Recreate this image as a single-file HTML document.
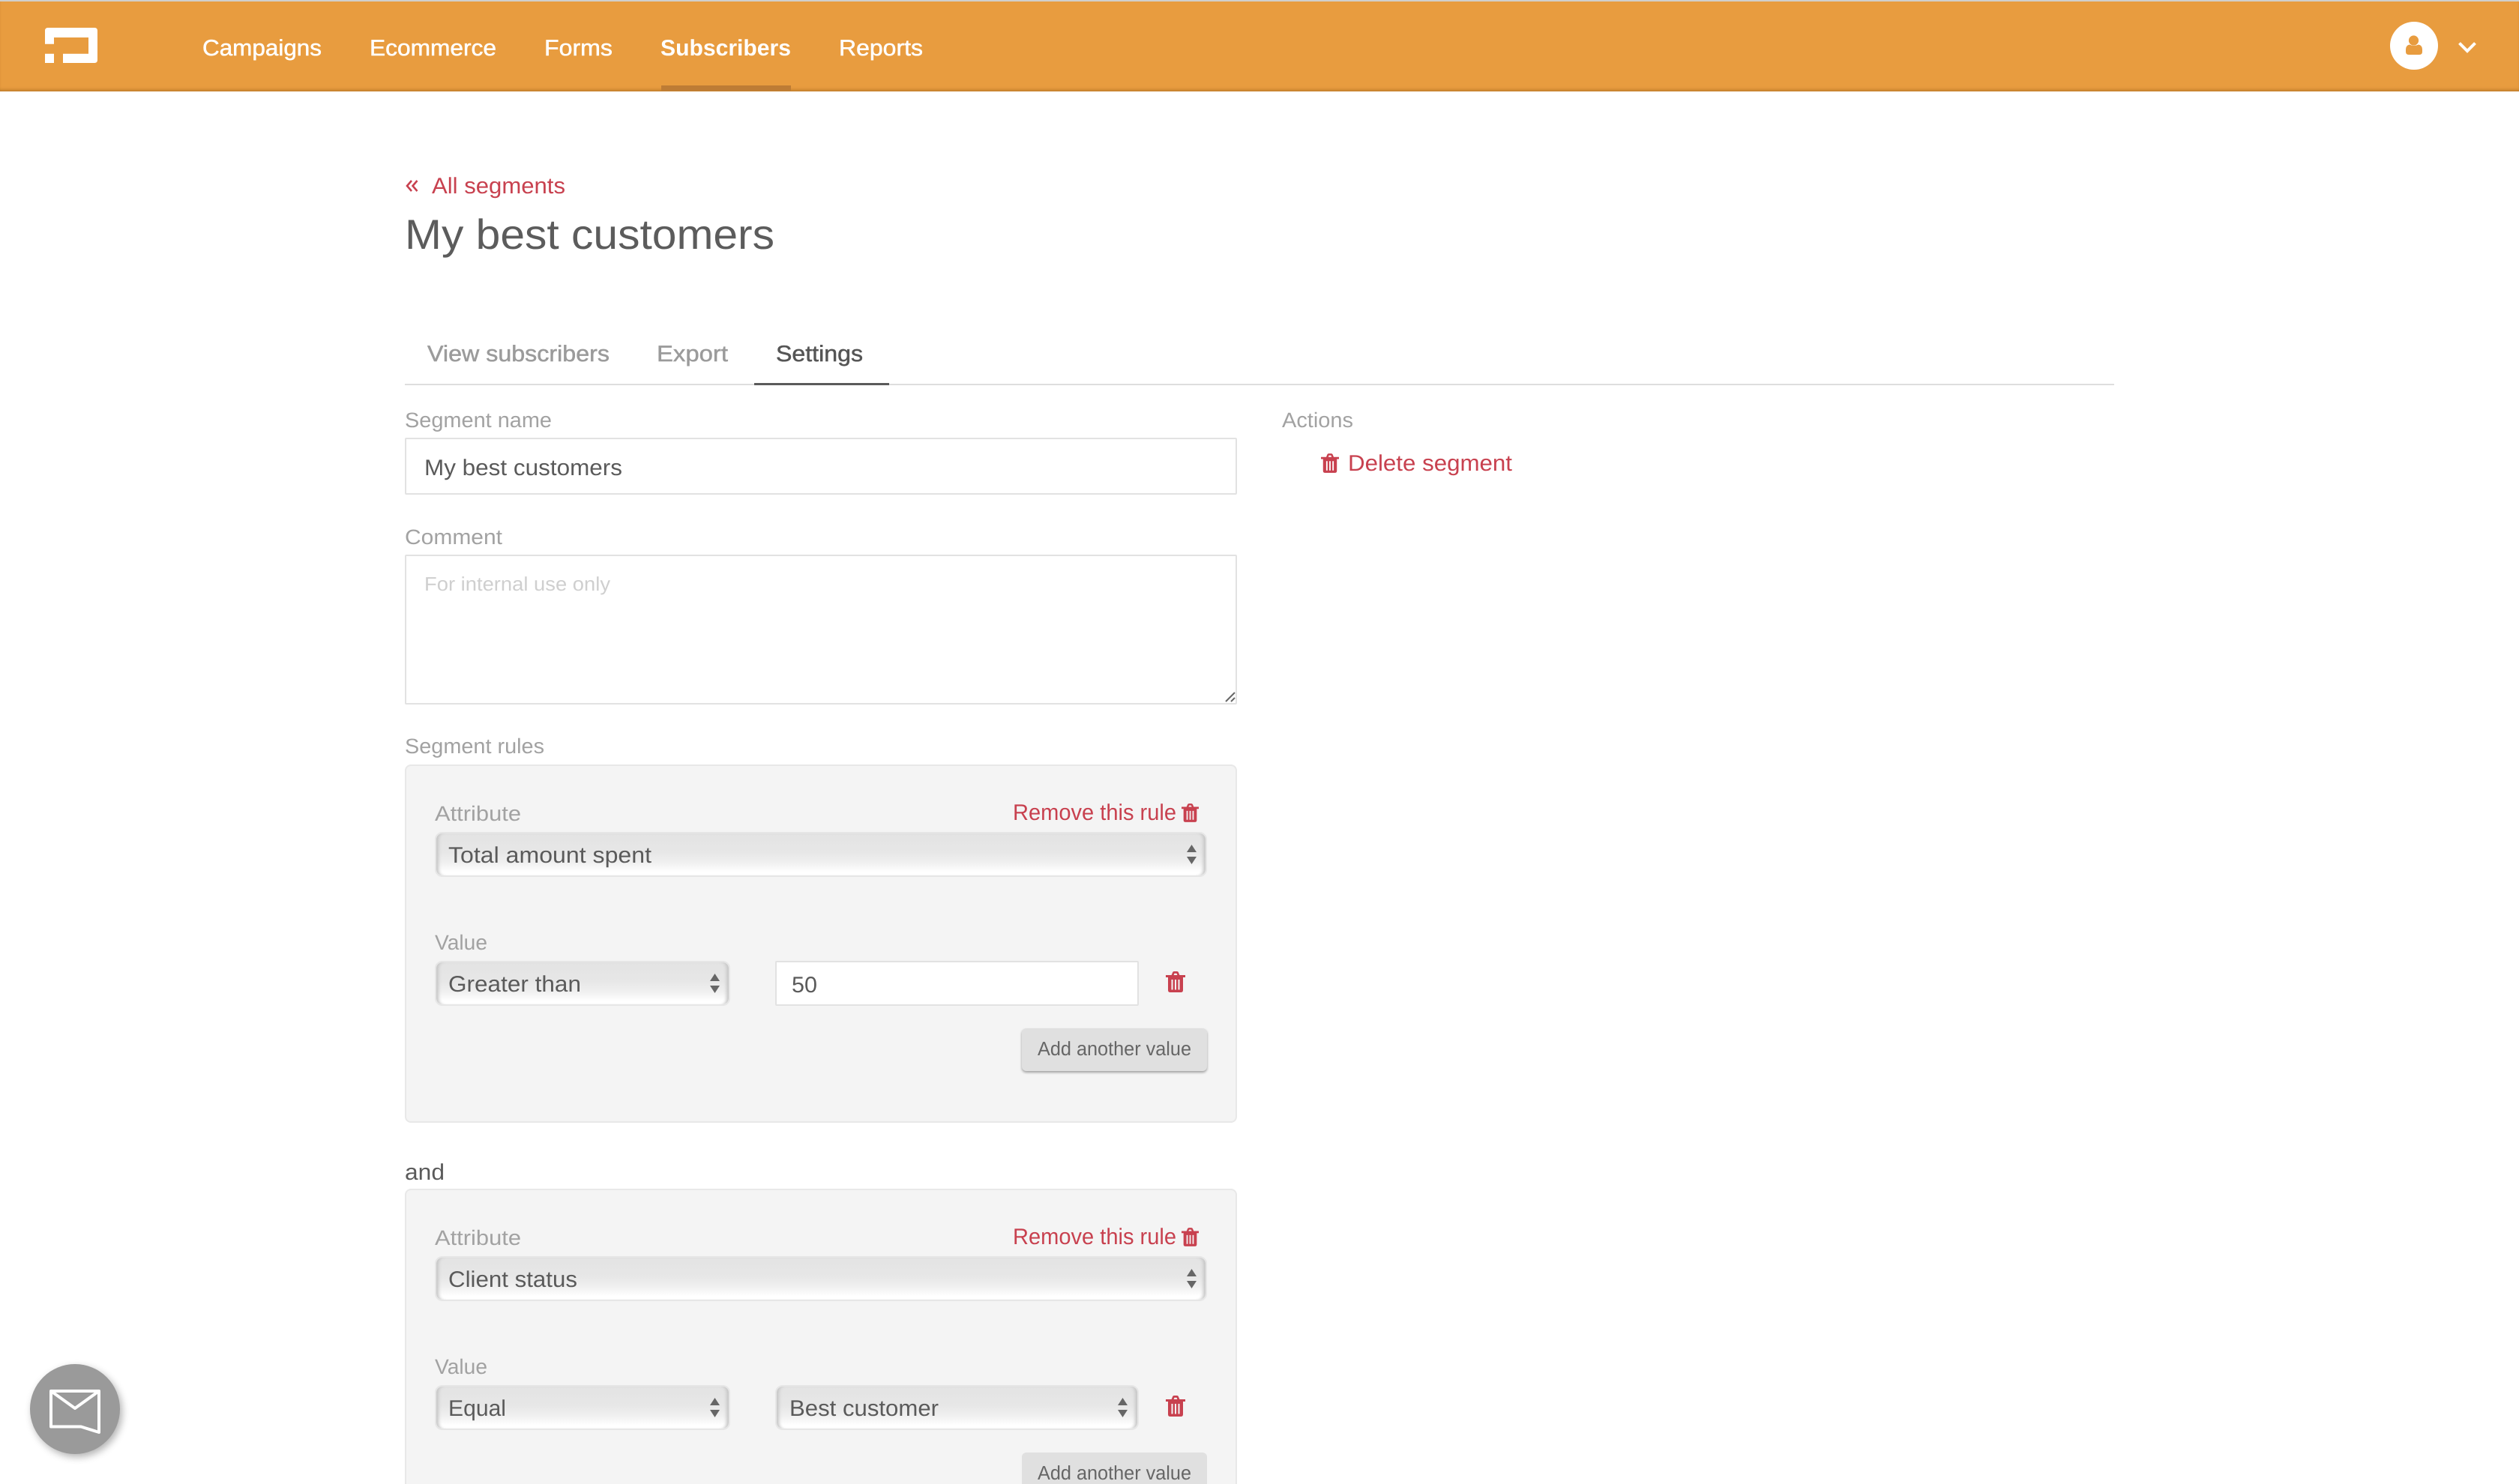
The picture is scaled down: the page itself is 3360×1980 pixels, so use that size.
<!DOCTYPE html>
<html lang="en">
<head>
<meta charset="utf-8">
<title>My best customers</title>
<style>
html,body{margin:0;padding:0;width:3360px;height:1980px;overflow:hidden;background:#fff}
#page{position:relative;width:3360px;height:1980px;overflow:hidden;background:#fff}
.a{position:absolute;box-sizing:border-box}
#hd{left:0;top:0;width:3360px;height:122px;background:#e89c3f;border-top:2px solid #d0cfcc;box-shadow:inset 0 -4px 4px -2px rgba(120,70,10,.4)}
#act{left:882px;top:114px;width:173px;height:7px;background:#bd7c35}
.line{left:540px;top:512px;width:2280px;height:2px;background:#dedede}
#tabon{left:1006px;top:511px;width:180px;height:3px;background:#5a5a5a}
.in{background:#fff;border:2px solid #e2e2e2;border-radius:2px}
.panel{background:#f4f4f4;border:2px solid #e8e8e8;border-radius:8px;left:540px;width:1110px}
.sel{border:2px solid #e6e6e6;border-radius:10px;background:linear-gradient(#e3e3e3 0,#e7e7e7 45%,#f0f0f0 70%,#fff 92%);box-shadow:inset 6px 0 4px -3px #c6c6c6,inset -6px 0 4px -3px #c6c6c6}
.btn{background:#e0e0e0;border-radius:6px;box-shadow:0 2px 3px rgba(0,0,0,.35)}
#fab{left:40px;top:1820px;width:120px;height:120px;border-radius:50%;background:#9a9a9a;box-shadow:3px 4px 10px rgba(0,0,0,.3)}
svg#o{position:absolute;left:0;top:0}
text{font-family:"Liberation Sans",sans-serif;text-rendering:geometricPrecision}
.t30{font-size:30px}.t28{font-size:28px}.t26{font-size:26px}
.nav{font-size:30px;fill:#fff;stroke:#fff;stroke-width:.5px}
.lab{font-size:28px;fill:#a2a2a2}
.red{font-size:30px;fill:#c8414f}
.dark{font-size:30px;fill:#5a5a5a}
.tab{font-size:30px;fill:#9b9b9b;stroke:#9b9b9b;stroke-width:.5px}
</style>
</head>
<body>
<div id="page">
<div class="a" id="hd"></div>
<div class="a" id="act"></div>
<div class="a line"></div>
<div class="a" id="tabon"></div>

<div class="a in" style="left:540px;top:584px;width:1110px;height:76px"></div>
<div class="a in" style="left:540px;top:740px;width:1110px;height:200px"></div>

<div class="a panel" style="top:1020px;height:478px"></div>
<div class="a sel" style="left:580px;top:1110px;width:1030px;height:60px"></div>
<div class="a sel" style="left:580px;top:1282px;width:394px;height:60px"></div>
<div class="a in" style="left:1034px;top:1282px;width:485px;height:60px"></div>
<div class="a btn" style="left:1363px;top:1372px;width:247px;height:57px"></div>

<div class="a panel" style="top:1586px;height:394px;border-bottom:0;border-radius:8px 8px 0 0"></div>
<div class="a sel" style="left:580px;top:1676px;width:1030px;height:60px"></div>
<div class="a sel" style="left:580px;top:1848px;width:394px;height:60px"></div>
<div class="a sel" style="left:1034px;top:1848px;width:485px;height:60px"></div>
<div class="a btn" style="left:1363px;top:1938px;width:247px;height:42px;border-radius:6px 6px 0 0;box-shadow:none"></div>

<div class="a" id="fab"></div>

<svg id="o" width="3360" height="1980" viewBox="0 0 3360 1980" xmlns="http://www.w3.org/2000/svg">
<defs>
<symbol id="trash" viewBox="0 0 26 28">
<path fill-rule="evenodd" d="M0 5h26v3H0zM7.6 5L9 1.6Q9.6 0 11.2 0h3.6Q16.4 0 17 1.6L18.4 5h-3l-.9-2.2h-3L10.6 5zM3 8h20v17q0 3-3 3H6q-3 0-3-3zM7.5 11v13.5h2V11zM12 11v13.5h2V11zM16.5 11v13.5h2V11z"/>
</symbol>
<symbol id="arr" viewBox="0 0 13 26">
<path d="M6.5 0L13 10H0zM0 16h13L6.5 26z"/>
</symbol>
</defs>

<!-- logo -->
<path fill="#fff" d="M64 37H126Q130 37 130 41V80Q130 84 126 84H84V71.7H118V50H72V58.7H60V41Q60 37 64 37ZM60 71.7H72V84H60Z"/>

<!-- nav -->
<text class="nav" x="270" y="74" textLength="159" lengthAdjust="spacingAndGlyphs">Campaigns</text>
<text class="nav" x="493" y="74" textLength="169" lengthAdjust="spacingAndGlyphs">Ecommerce</text>
<text class="nav" x="726" y="74" textLength="91" lengthAdjust="spacingAndGlyphs">Forms</text>
<text class="nav" x="881" y="74" textLength="174" lengthAdjust="spacingAndGlyphs" font-weight="700" style="stroke:none">Subscribers</text>
<text class="nav" x="1119" y="74" textLength="112" lengthAdjust="spacingAndGlyphs">Reports</text>

<!-- avatar -->
<circle cx="3220" cy="61" r="32" fill="#fff"/>
<circle cx="3219.5" cy="54" r="6.6" fill="#e89c3f"/>
<path fill="#e89c3f" d="M3214 59.5Q3219.5 62.5 3226 59.5Q3231 60.5 3231 66V69Q3231 73 3227 73H3213Q3209 73 3209 69V66Q3209 60.5 3214 59.5Z"/>
<path fill="none" stroke="#fff" stroke-width="4" d="M3280.5 57.5L3291 68L3301.5 57.5"/>

<!-- heading -->
<path fill="none" stroke="#c8414f" stroke-width="2.6" d="M549 241L543 248L549 255M556.5 241L550.5 248L556.5 255"/>
<text class="red" x="576" y="258" textLength="178" lengthAdjust="spacingAndGlyphs">All segments</text>
<text x="540" y="332" font-size="56" fill="#5c5c5c" textLength="493" lengthAdjust="spacingAndGlyphs">My best customers</text>

<!-- tabs -->
<text class="tab" x="570" y="482" textLength="243" lengthAdjust="spacingAndGlyphs">View subscribers</text>
<text class="tab" x="876" y="482" textLength="95" lengthAdjust="spacingAndGlyphs">Export</text>
<text class="tab" x="1035" y="482" textLength="116" lengthAdjust="spacingAndGlyphs" style="fill:#555;stroke:#555">Settings</text>

<!-- form -->
<text class="lab" x="540" y="570" textLength="196" lengthAdjust="spacingAndGlyphs">Segment name</text>
<text class="dark" x="566" y="634" textLength="264" lengthAdjust="spacingAndGlyphs">My best customers</text>
<text class="lab" x="540" y="726" textLength="130" lengthAdjust="spacingAndGlyphs">Comment</text>
<text class="t26" x="566" y="788" fill="#cfcfcf" textLength="248" lengthAdjust="spacingAndGlyphs">For internal use only</text>
<path stroke="#666" stroke-width="2" fill="none" d="M1635 936L1647 924M1642 936L1647 931"/>
<text class="lab" x="540" y="1005" textLength="186" lengthAdjust="spacingAndGlyphs">Segment rules</text>

<!-- actions -->
<text class="lab" x="1710" y="570" textLength="95" lengthAdjust="spacingAndGlyphs">Actions</text>
<use href="#trash" x="1762" y="605" width="24" height="26" fill="#c8414f"/>
<text class="red" x="1798" y="628" textLength="219" lengthAdjust="spacingAndGlyphs">Delete segment</text>

<!-- rule 1 -->
<text class="lab" x="580" y="1095" textLength="115" lengthAdjust="spacingAndGlyphs">Attribute</text>
<text class="red" x="1351" y="1094" textLength="218" lengthAdjust="spacingAndGlyphs">Remove this rule</text>
<use href="#trash" x="1576" y="1072" width="23" height="25" fill="#c8414f"/>
<text class="dark" x="598" y="1151" textLength="271" lengthAdjust="spacingAndGlyphs">Total amount spent</text>
<use href="#arr" x="1583" y="1127" width="13" height="26" fill="#666"/>
<text class="lab" x="580" y="1267" textLength="70" lengthAdjust="spacingAndGlyphs">Value</text>
<text class="dark" x="598" y="1323" textLength="177" lengthAdjust="spacingAndGlyphs">Greater than</text>
<use href="#arr" x="947" y="1299" width="13" height="26" fill="#666"/>
<text class="dark" x="1056" y="1324" textLength="34" lengthAdjust="spacingAndGlyphs">50</text>
<use href="#trash" x="1555" y="1296" width="26" height="28" fill="#c8414f"/>
<text class="t26" x="1384" y="1408" fill="#666" textLength="205" lengthAdjust="spacingAndGlyphs">Add another value</text>

<!-- and -->
<text class="dark" x="540" y="1574" textLength="53" lengthAdjust="spacingAndGlyphs">and</text>

<!-- rule 2 -->
<text class="lab" x="580" y="1661" textLength="115" lengthAdjust="spacingAndGlyphs">Attribute</text>
<text class="red" x="1351" y="1660" textLength="218" lengthAdjust="spacingAndGlyphs">Remove this rule</text>
<use href="#trash" x="1576" y="1638" width="23" height="25" fill="#c8414f"/>
<text class="dark" x="598" y="1717" textLength="172" lengthAdjust="spacingAndGlyphs">Client status</text>
<use href="#arr" x="1583" y="1693" width="13" height="26" fill="#666"/>
<text class="lab" x="580" y="1833" textLength="70" lengthAdjust="spacingAndGlyphs">Value</text>
<text class="dark" x="598" y="1889" textLength="77" lengthAdjust="spacingAndGlyphs">Equal</text>
<use href="#arr" x="947" y="1865" width="13" height="26" fill="#666"/>
<text class="dark" x="1053" y="1889" textLength="199" lengthAdjust="spacingAndGlyphs">Best customer</text>
<use href="#arr" x="1491" y="1865" width="13" height="26" fill="#666"/>
<use href="#trash" x="1555" y="1862" width="26" height="28" fill="#c8414f"/>
<text class="t26" x="1384" y="1974" fill="#666" textLength="205" lengthAdjust="spacingAndGlyphs">Add another value</text>

<!-- chat fab -->
<path fill="none" stroke="#fff" stroke-width="4" stroke-linejoin="round" d="M68 1856H132V1911L108 1903.5H68ZM68 1856L100 1879L132 1856"/>
</svg>
</div>
</body>
</html>
